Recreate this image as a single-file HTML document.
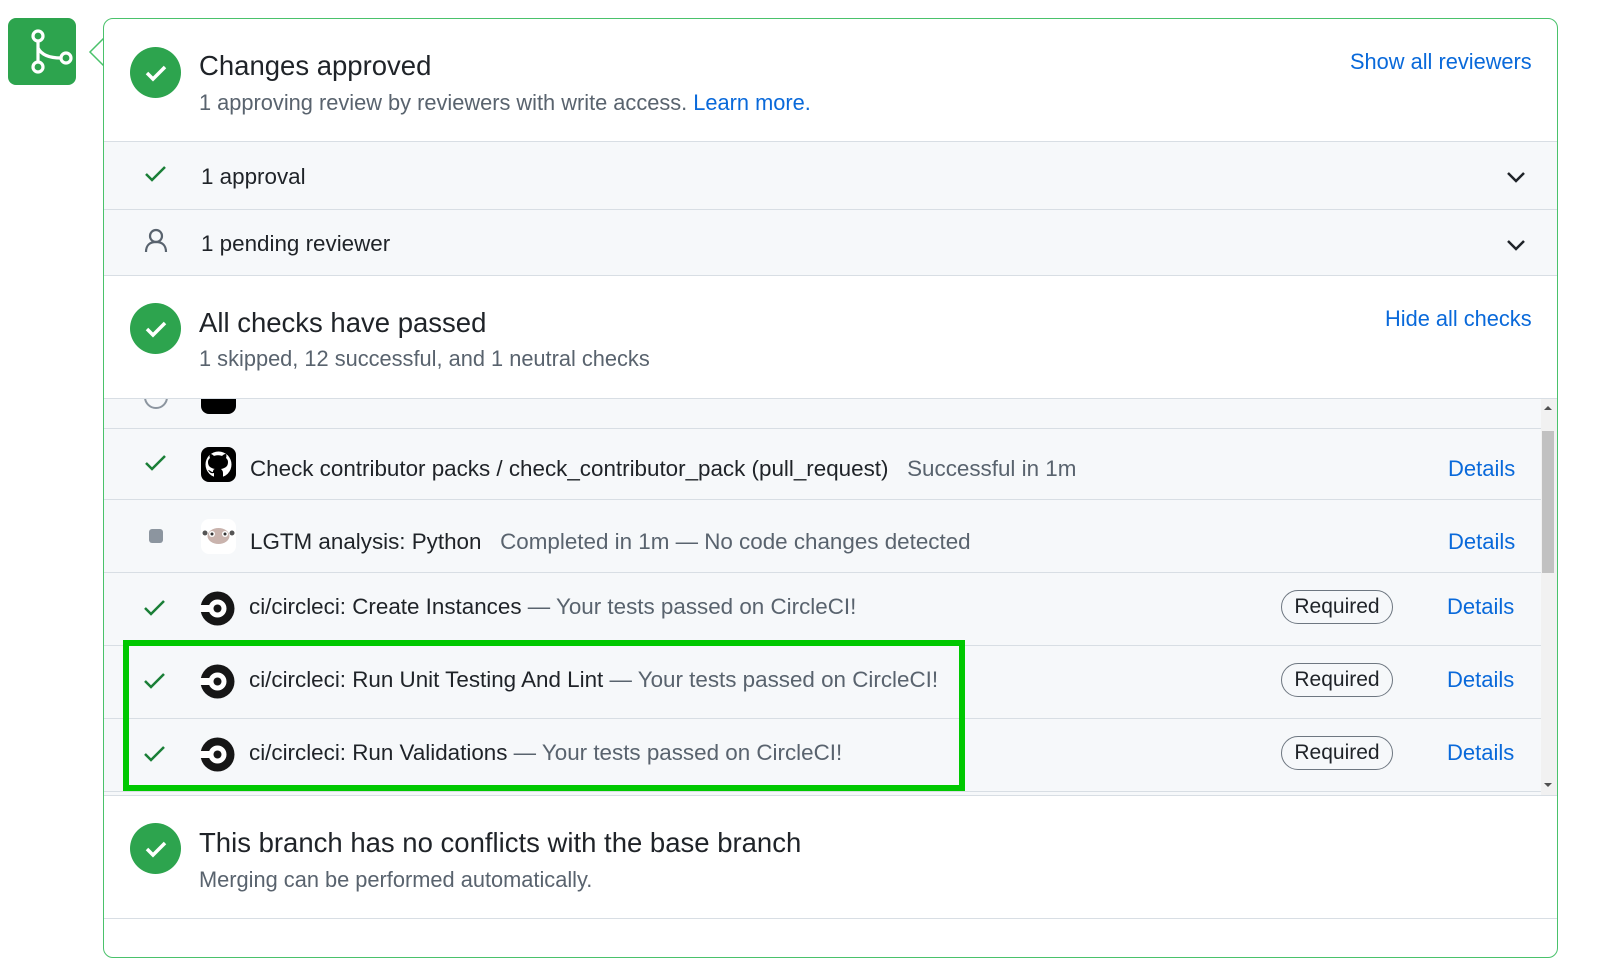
<!DOCTYPE html>
<html><head><meta charset="utf-8"><style>
*{box-sizing:border-box;margin:0;padding:0}
body{width:1599px;height:940px;background:#fff;font-family:"Liberation Sans",sans-serif;color:#1f2328;position:relative;overflow:hidden}
.abs{position:absolute}
.box{left:103px;top:18px;width:1455px;height:940px;border:1.5px solid #4ac26b;border-radius:10px;overflow:hidden;background:#fff}
.circ{position:absolute;width:51px;height:51px;border-radius:50%;background:#2da44e}
.t{position:absolute;font-size:27.5px;white-space:nowrap}
.s{position:absolute;font-size:21.8px;color:#59636e;white-space:nowrap}
.link{color:#0969da}
.row{position:absolute;left:0;width:1454px;background:#f6f8fa;border-top:1px solid #d8dee4}
.rt{position:absolute;font-size:22.4px;white-space:nowrap}
.req{position:absolute;left:1178px;width:112px;height:34px;border:1.5px solid #6e7781;border-radius:17px;font-size:21px;text-align:center;line-height:31px}
.det{position:absolute;left:1344px;font-size:22px;color:#0969da}
.ic{position:absolute;left:97px;width:35px;height:35px}
</style></head><body>
<div class="abs" style="left:8px;top:18px;width:68px;height:67px;border-radius:8px;background:#2da44e">
<svg width="68" height="67" viewBox="0 0 68 67"><g fill="none" stroke="#fff" stroke-width="3.2"><circle cx="30" cy="18" r="5"/><circle cx="30" cy="49" r="5"/><circle cx="58" cy="40" r="5"/><path d="M30 23v21M30 30c3 6 10 10 23 10"/></g></svg></div>
<svg class="abs" style="left:88px;top:38px" width="18" height="30"><path d="M16 0L2 14L16 28" fill="#fff" stroke="#4ac26b" stroke-width="1.5"/></svg>
<div class="abs box">
 <div class="circ" style="left:26px;top:28px"><svg width="51" height="51"><path d="M17 26l6 6l12-12" fill="none" stroke="#fff" stroke-width="3.5"/></svg></div>
 <div class="t" style="left:95px;top:31px">Changes approved</div>
 <div class="s" style="left:95px;top:71px">1 approving review by reviewers with write access. <span class="link">Learn more.</span></div>
 <div class="s link" style="left:1246px;top:30px">Show all reviewers</div>
 <div class="row" style="top:122px;height:68px"><svg class="abs" style="left:40px;top:22px" width="24" height="20"><path d="M2 10l6 6l13-13" fill="none" stroke="#1a7f37" stroke-width="2.5"/></svg><div class="rt" style="left:97px;top:22px">1 approval</div><svg class="abs" style="left:1402px;top:28px" width="20" height="14"><path d="M2 3l8 8l8-8" fill="none" stroke="#1f2328" stroke-width="2.5"/></svg></div>
 <div class="row" style="top:190px;height:67px"><svg class="abs" style="left:40px;top:18px" width="24" height="26"><circle cx="12" cy="8" r="6" fill="none" stroke="#59636e" stroke-width="2.2"/><path d="M2 24c0-7 4-10 10-10s10 3 10 10" fill="none" stroke="#59636e" stroke-width="2.2"/></svg><div class="rt" style="left:97px;top:21px">1 pending reviewer</div><svg class="abs" style="left:1402px;top:28px" width="20" height="14"><path d="M2 3l8 8l8-8" fill="none" stroke="#1f2328" stroke-width="2.5"/></svg></div>
 <div class="abs" style="top:256px;left:0;width:1454px;height:1px;background:#d8dee4"></div>
 <div class="circ" style="left:26px;top:284px"><svg width="51" height="51"><path d="M17 26l6 6l12-12" fill="none" stroke="#fff" stroke-width="3.5"/></svg></div>
 <div class="t" style="left:95px;top:288px">All checks have passed</div>
 <div class="s" style="left:95px;top:327px">1 skipped, 12 successful, and 1 neutral checks</div>
 <div class="s link" style="left:1281px;top:287px">Hide all checks</div>
 <div class="abs" style="top:379px;left:0;width:1454px;height:397px;background:#f6f8fa;border-top:1px solid #d8dee4;overflow:hidden">
  <div class="abs" style="left:1437px;top:0;width:16px;height:397px;background:#f1f1f1"></div>
  <div class="abs" style="left:1438px;top:32px;width:12px;height:142px;background:#c1c1c1"></div>
  <svg class="abs" style="left:1439px;top:5px" width="10" height="8"><path d="M1 6L5 2L9 6Z" fill="#505050"/></svg>
  <svg class="abs" style="left:1439px;top:382px" width="10" height="8"><path d="M1 2L5 6L9 2Z" fill="#505050"/></svg>
  <div class="abs" style="left:40px;top:-14px;width:24px;height:24px;border-radius:50%;border:2px solid #8c959f"></div>
  <div class="ic" style="top:-20px;border-radius:8px;background:#000"></div>
  <div class="abs" style="left:0;top:29px;width:1437px;height:1px;background:#d8dee4"></div>
  <svg class="abs" style="left:40px;top:54px" width="24" height="20"><path d="M2 10l6 6l13-13" fill="none" stroke="#1a7f37" stroke-width="2.5"/></svg>
  <div class="ic" style="top:48px;border-radius:8px;background:#000"><svg width="35" height="35" viewBox="0 0 35 35"><circle cx="17.5" cy="17.5" r="13" fill="#fff"/><path d="M13 31v-5c-4 1-5-2-6-3c2 0 3 2 5 2c0-2 1-3 2-3c-5-1-7-3-7-7c0-2 1-3 2-4c-1-2 0-4 0-4c2 0 3 1 4 2c2-1 6-1 8 0c1-1 2-2 4-2c0 0 1 2 0 4c1 1 2 2 2 4c0 4-2 6-7 7c1 1 2 2 2 4v5z" fill="#000"/></svg></div>
  <div class="rt" style="left:146px;top:70px;transform:translateY(-50%)">Check contributor packs / check_contributor_pack (pull_request) <span style="color:#59636e">&nbsp;&nbsp;Successful in 1m</span></div>
  <div class="det" style="top:57px">Details</div>
  <div class="abs" style="left:0;top:100px;width:1437px;height:1px;background:#d8dee4"></div>
  <div class="abs" style="left:45px;top:130px;width:14px;height:14px;border-radius:3px;background:#8c959f"></div>
  <div class="ic" style="top:120px;border-radius:8px;background:#fff"><svg width="35" height="35"><ellipse cx="17.5" cy="17" rx="11" ry="8" fill="#c9b3ad"/><circle cx="11" cy="15" r="3" fill="#fff"/><circle cx="24" cy="15" r="3" fill="#fff"/><circle cx="11" cy="15" r="1.5" fill="#333"/><circle cx="24" cy="15" r="1.5" fill="#333"/><circle cx="4" cy="14" r="2.5" fill="#555"/><circle cx="31" cy="14" r="2.5" fill="#555"/></svg></div>
  <div class="rt" style="left:146px;top:143px;transform:translateY(-50%)">LGTM analysis: Python <span style="color:#59636e">&nbsp;&nbsp;Completed in 1m — No code changes detected</span></div>
  <div class="det" style="top:130px">Details</div>
  <div class="abs" style="left:0;top:173px;width:1437px;height:1px;background:#d8dee4"></div>
  <div class="abs" style="left:0;top:246px;width:1437px;height:1px;background:#d8dee4"></div>
  <div class="abs" style="left:0;top:319px;width:1437px;height:1px;background:#d8dee4"></div>
  <div class="abs" style="left:0;top:392px;width:1437px;height:1px;background:#d8dee4"></div>
 </div>
 <div class="abs" style="top:776px;left:0;width:1454px;height:1px;background:#d8dee4"></div>
 <div class="circ" style="left:26px;top:804px"><svg width="51" height="51"><path d="M17 26l6 6l12-12" fill="none" stroke="#fff" stroke-width="3.5"/></svg></div>
 <div class="t" style="left:95px;top:808px">This branch has no conflicts with the base branch</div>
 <div class="s" style="left:95px;top:848px">Merging can be performed automatically.</div>
 <div class="abs" style="top:899px;left:0;width:1454px;height:1px;background:#d8dee4"></div>
</div>
<div class="abs" style="left:103px;top:572px;width:1437px;height:220px">
 <div class="abs" style="left:0;top:0;height:73px;width:1437px">
  <svg class="abs" style="left:40px;top:26px" width="24" height="20"><path d="M2 10l6 6l13-13" fill="none" stroke="#1a7f37" stroke-width="2.5"/></svg>
  <svg class="abs" style="left:97px;top:19px" width="35" height="35"><circle cx="17.5" cy="17.5" r="17" fill="#161616"/><circle cx="17.5" cy="17.5" r="9" fill="#fff"/><rect x="0" y="14" width="12" height="7" fill="#fff"/><circle cx="17.5" cy="17.5" r="4" fill="#161616"/></svg>
  <div class="rt" style="left:146px;top:35px;transform:translateY(-50%)">ci/circleci: Create Instances <span style="color:#59636e">— Your tests passed on CircleCI!</span></div>
  <div class="req" style="top:18px">Required</div><div class="det" style="top:22px">Details</div>
 </div>
 <div class="abs" style="left:0;top:73px;height:73px;width:1437px">
  <svg class="abs" style="left:40px;top:26px" width="24" height="20"><path d="M2 10l6 6l13-13" fill="none" stroke="#1a7f37" stroke-width="2.5"/></svg>
  <svg class="abs" style="left:97px;top:19px" width="35" height="35"><circle cx="17.5" cy="17.5" r="17" fill="#161616"/><circle cx="17.5" cy="17.5" r="9" fill="#fff"/><rect x="0" y="14" width="12" height="7" fill="#fff"/><circle cx="17.5" cy="17.5" r="4" fill="#161616"/></svg>
  <div class="rt" style="left:146px;top:35px;transform:translateY(-50%)">ci/circleci: Run Unit Testing And Lint <span style="color:#59636e">— Your tests passed on CircleCI!</span></div>
  <div class="req" style="top:18px">Required</div><div class="det" style="top:22px">Details</div>
 </div>
 <div class="abs" style="left:0;top:146px;height:73px;width:1437px">
  <svg class="abs" style="left:40px;top:26px" width="24" height="20"><path d="M2 10l6 6l13-13" fill="none" stroke="#1a7f37" stroke-width="2.5"/></svg>
  <svg class="abs" style="left:97px;top:19px" width="35" height="35"><circle cx="17.5" cy="17.5" r="17" fill="#161616"/><circle cx="17.5" cy="17.5" r="9" fill="#fff"/><rect x="0" y="14" width="12" height="7" fill="#fff"/><circle cx="17.5" cy="17.5" r="4" fill="#161616"/></svg>
  <div class="rt" style="left:146px;top:35px;transform:translateY(-50%)">ci/circleci: Run Validations <span style="color:#59636e">— Your tests passed on CircleCI!</span></div>
  <div class="req" style="top:18px">Required</div><div class="det" style="top:22px">Details</div>
 </div>
</div>
<div class="abs" style="left:123px;top:640px;width:842px;height:151px;border:6px solid #00c800"></div>
</body></html>
